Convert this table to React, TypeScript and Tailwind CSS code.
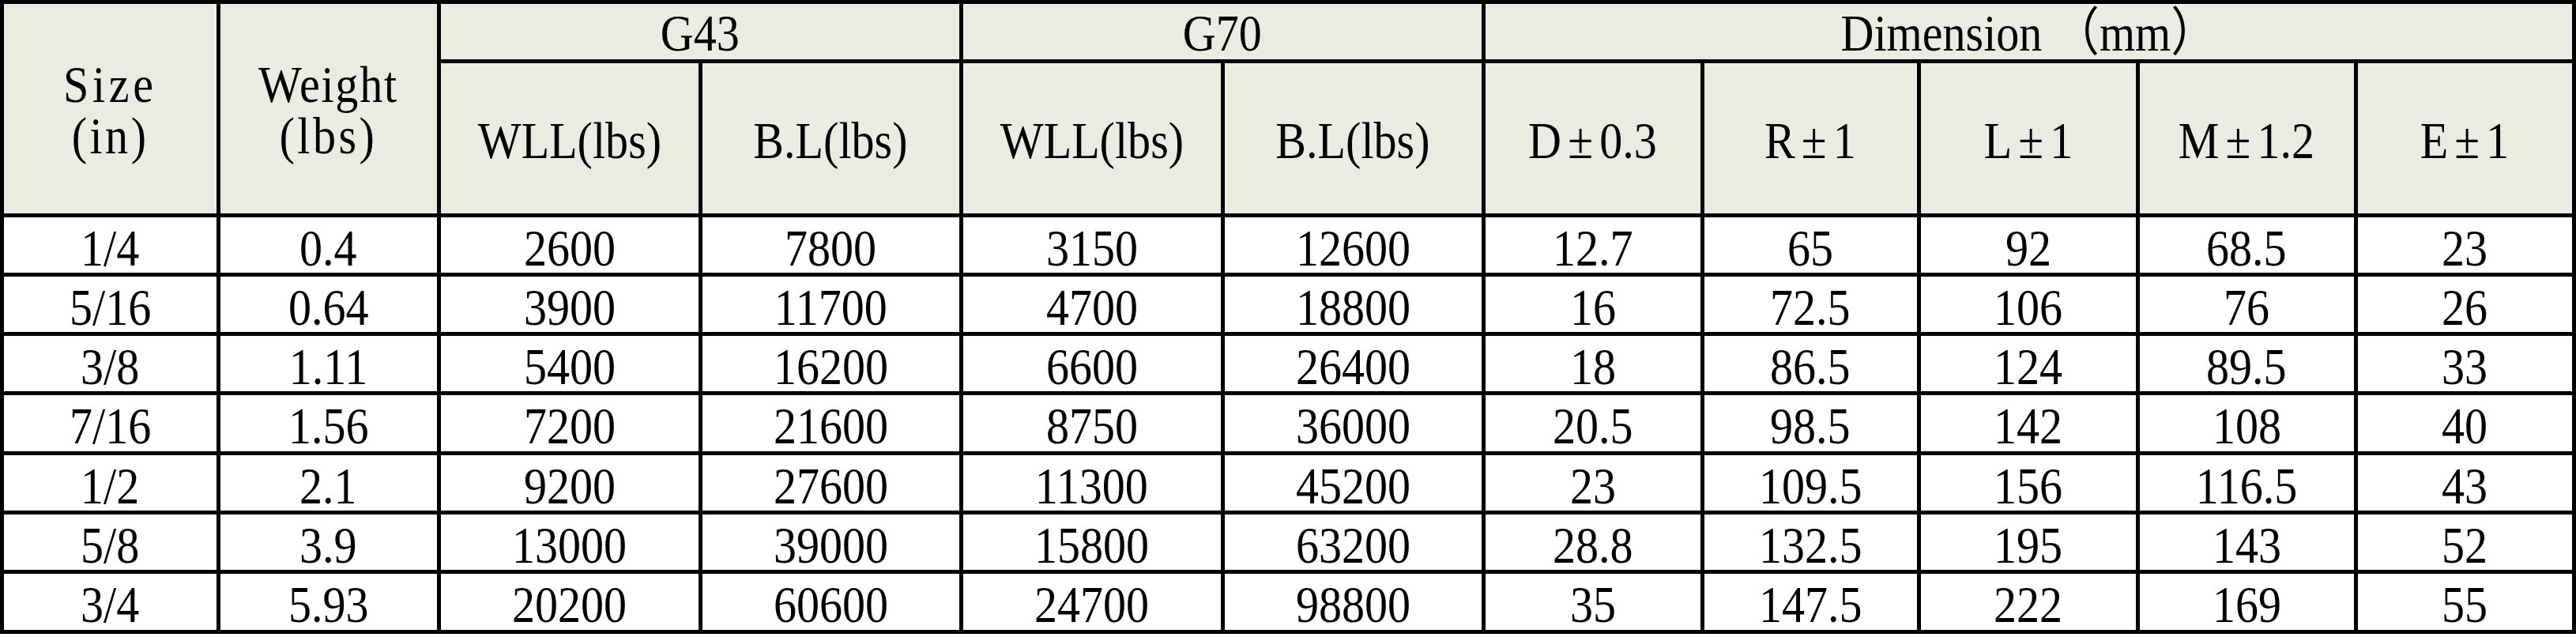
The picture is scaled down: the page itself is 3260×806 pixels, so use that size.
import React from "react"

const rows = [
  ["1/4", "0.4", "2600", "7800", "3150", "12600", "12.7", "65", "92", "68.5", "23"],
  ["5/16", "0.64", "3900", "11700", "4700", "18800", "16", "72.5", "106", "76", "26"],
  ["3/8", "1.11", "5400", "16200", "6600", "26400", "18", "86.5", "124", "89.5", "33"],
  ["7/16", "1.56", "7200", "21600", "8750", "36000", "20.5", "98.5", "142", "108", "40"],
  ["1/2", "2.1", "9200", "27600", "11300", "45200", "23", "109.5", "156", "116.5", "43"],
  ["5/8", "3.9", "13000", "39000", "15800", "63200", "28.8", "132.5", "195", "143", "52"],
  ["3/4", "5.93", "20200", "60600", "24700", "98800", "35", "147.5", "222", "169", "55"],
]

const subHeads = ["WLL(lbs)", "B.L(lbs)", "WLL(lbs)", "B.L(lbs)"]
const dims = [
  ["D", "0.3"],
  ["R", "1"],
  ["L", "1"],
  ["M", "1.2"],
  ["E", "1"],
]

const colWidths = [273.5, 279, 331, 330, 331, 330, 277, 274, 277, 276, 276.5]

function T({ children, className = "" }: { children: React.ReactNode; className?: string }) {
  return <span className={`inline-block scale-x-[0.88] whitespace-nowrap ${className}`}>{children}</span>
}

const cell = "border-[5px] border-black text-center p-0 font-normal"

export default function App() {
  return (
    <div className="w-[3260px] h-[806px] bg-white text-black" style={{ fontFamily: '"Liberation Serif", "Noto Sans CJK SC", serif' }}>
      <table className="table-fixed border-collapse w-[3260px] text-[66px] leading-[56px]">
        <colgroup>
          {colWidths.map((w, i) => (
            <col key={i} style={{ width: w }} />
          ))}
        </colgroup>
        <thead className="bg-[#ecebe2]">
          <tr>
            <th rowSpan={2} className={`${cell} align-top leading-[65px] pt-[69px]`}>
              <T className="tracking-[0.08em]">Size</T>
              <br />
              <T className="tracking-[0.06em]">(in)</T>
            </th>
            <th rowSpan={2} className={`${cell} align-top leading-[65px] pt-[69px]`}>
              <T className="tracking-[0.03em]">Weight</T>
              <br />
              <T className="tracking-[0.06em]">(lbs)</T>
            </th>
            <th colSpan={2} className={`${cell} align-top h-[74.5px] pt-[9px]`}>
              <T>G43</T>
            </th>
            <th colSpan={2} className={`${cell} align-top h-[74.5px] pt-[9px]`}>
              <T>G70</T>
            </th>
            <th colSpan={5} className={`${cell} align-top h-[74.5px] pt-[9px]`}>
              <T>Dimension （mm）</T>
            </th>
          </tr>
          <tr>
            {subHeads.map((h, i) => (
              <th key={i} className={`${cell} align-middle h-[195px] pt-[6px]`}>
                <T>{h}</T>
              </th>
            ))}
            {dims.map(([k, v]) => (
              <th key={k} className={`${cell} align-middle h-[195px] pt-[6px]`}>
                <T>
                  {k}
                  <span className="px-[0.14em]">±</span>
                  {v}
                </T>
              </th>
            ))}
          </tr>
        </thead>
        <tbody>
          {rows.map((r, ri) => (
            <tr key={ri}>
              {r.map((v, ci) => (
                <td key={ci} className={`${cell} align-top h-[75.3px] pt-[11px]`}>
                  <T>{v}</T>
                </td>
              ))}
            </tr>
          ))}
        </tbody>
      </table>
    </div>
  )
}
